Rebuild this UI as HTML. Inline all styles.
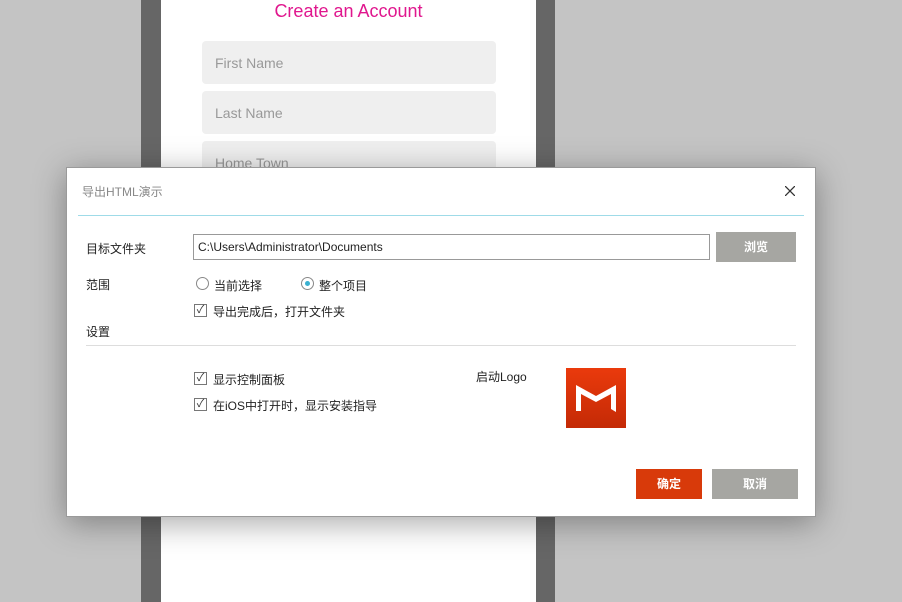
<!DOCTYPE html>
<html><head><meta charset="utf-8"><style>
*{margin:0;padding:0;box-sizing:border-box}
body{width:902px;height:602px;position:relative;overflow:hidden;background:#c4c4c4;font-family:"Liberation Sans","Noto Sans CJK SC",sans-serif;font-size:12px;color:#222}
.a{position:absolute}
.inp{left:202px;width:294px;height:43px;background:#efefef;border-radius:4px;color:#999;font-size:14px;padding:14px 13px}
.cb{width:13px;height:13px;border:1px solid #777;background:#fff;font-size:11px;line-height:11px;text-align:center;color:#333}
.rd{width:13px;height:13px;border:1px solid #888;border-radius:50%;background:#fff}
.btn{color:#fff;font-weight:bold;text-align:center;font-size:12px}
</style></head><body>
<div class="a" style="left:141px;top:0;width:20px;height:602px;background:#666"></div>
<div class="a" style="left:536px;top:0;width:19px;height:602px;background:#666"></div>
<div class="a" style="left:161px;top:0;width:375px;height:602px;background:#fff"></div>
<div class="a" style="left:161px;top:1px;width:375px;text-align:center;color:#e0178e;font-size:18px">Create an Account</div>
<div class="a inp" style="top:41px">First Name</div>
<div class="a inp" style="top:91px">Last Name</div>
<div class="a inp" style="top:141px">Home Town</div>
<div class="a" style="left:66px;top:167px;width:750px;height:350px;background:#fff;border:1px solid #9a9a9a;box-shadow:0 6px 30px rgba(0,0,0,.35)"></div>
<div class="a" style="left:82px;top:183px;color:#888;font-size:12px">导出HTML演示</div>
<svg class="a" style="left:785px;top:186px" width="10" height="10"><path d="M0 0L10 10M10 0L0 10" stroke="#333" stroke-width="1.3"/></svg>
<div class="a" style="left:78px;top:215px;width:726px;height:1px;background:#9fdbe8"></div>
<div class="a" style="left:86px;top:240px">目标文件夹</div>
<div class="a" style="left:193px;top:234px;width:517px;height:26px;border:1px solid #999;padding:5px 4px">C:\Users\Administrator\Documents</div>
<div class="a btn" style="left:716px;top:232px;width:80px;height:30px;background:#a6a6a2;line-height:30px">浏览</div>
<div class="a" style="left:86px;top:276px">范围</div>
<div class="a rd" style="left:196px;top:277px"></div>
<div class="a" style="left:214px;top:277px">当前选择</div>
<div class="a rd" style="left:301px;top:277px"><div class="a" style="left:3px;top:3px;width:5px;height:5px;border-radius:50%;background:#3ab0d0"></div></div>
<div class="a" style="left:319px;top:277px">整个项目</div>
<div class="a cb" style="left:194px;top:304px">✓</div>
<div class="a" style="left:213px;top:303px">导出完成后，打开文件夹</div>
<div class="a" style="left:86px;top:323px">设置</div>
<div class="a" style="left:86px;top:345px;width:710px;height:1px;background:#ddd"></div>
<div class="a cb" style="left:194px;top:372px">✓</div>
<div class="a" style="left:213px;top:371px">显示控制面板</div>
<div class="a cb" style="left:194px;top:398px">✓</div>
<div class="a" style="left:213px;top:397px">在iOS中打开时，显示安装指导</div>
<div class="a" style="left:476px;top:368px">启动Logo</div>
<div class="a" style="left:566px;top:368px;width:60px;height:60px;background:linear-gradient(#ea3a0c,#c42a06)">
<svg width="60" height="60"><path d="M10 17L30 28L50 17L50 44L45 41L45 26L30 34L15 26L15 43L10 43Z" fill="#fff"/></svg></div>
<div class="a btn" style="left:636px;top:469px;width:66px;height:30px;background:#d83a0a;line-height:30px">确定</div>
<div class="a btn" style="left:712px;top:469px;width:86px;height:30px;background:#a6a6a2;line-height:30px">取消</div>
</body></html>
